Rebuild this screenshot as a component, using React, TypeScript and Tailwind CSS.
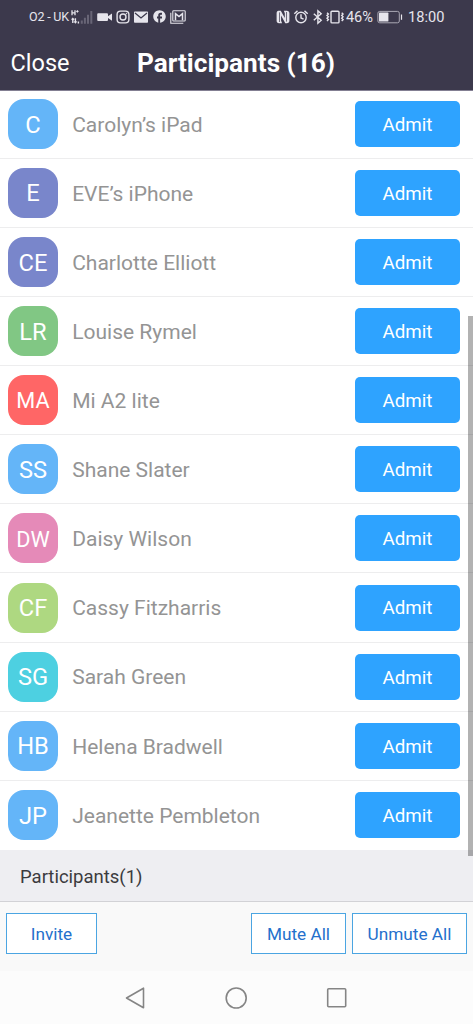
import type { ReactNode } from "react";
import { MdFacebook } from "react-icons/md";

const waiting = [
  { initials: "C", name: "Carolyn’s iPad", color: "bg-[#64b5f8]" },
  { initials: "E", name: "EVE’s iPhone", color: "bg-[#7986cb]" },
  { initials: "CE", name: "Charlotte Elliott", color: "bg-[#7986cb]" },
  { initials: "LR", name: "Louise Rymel", color: "bg-[#81c784]" },
  { initials: "MA", name: "Mi A2 lite", color: "bg-[#ff6666]" },
  { initials: "SS", name: "Shane Slater", color: "bg-[#64b5f8]" },
  { initials: "DW", name: "Daisy Wilson", color: "bg-[#e58ab8]" },
  { initials: "CF", name: "Cassy Fitzharris", color: "bg-[#aed881]" },
  { initials: "SG", name: "Sarah Green", color: "bg-[#4dd0e1]" },
  { initials: "HB", name: "Helena Bradwell", color: "bg-[#64b5f8]" },
  { initials: "JP", name: "Jeanette Pembleton", color: "bg-[#64b5f8]" },
];

function Signal() {
  return (
    <svg className="ml-[2px] h-4 w-[23px] shrink-0" viewBox="0 0 23 16" fill="none">
      <path d="M1 1.3v5M4 1.3v5M1 3.8h3" stroke="#e6e5ec" strokeWidth="1.3" />
      <path d="M5.2 2.4h2.4M6.4 1.2v2.4" stroke="#e6e5ec" />
      <path d="M1.8 9.5V14M.7 10.8l1.1-1.3 1.2 1.3M4.4 9.3v4.4M3.3 12.4l1.1 1.3 1.2-1.3M7.4 12.4v2.2" stroke="#e6e5ec" strokeWidth="1.4" />
      <path d="M10.8 11.5v3.2M13.9 8.8v5.9M17 5.8v8.9M20.3 2v12.7" stroke="#686576" strokeWidth="2" />
    </svg>
  );
}

function StatusBar() {
  return (
    <div className="flex h-[33px] items-center pl-[29px] text-[#e6e5ec]">
      <span className="w-[40px] shrink-0 whitespace-nowrap pt-[2px] text-[12.5px] tracking-[-0.2px]">O2 - UK</span>
      <Signal />
      <svg className="ml-[3px] h-4 w-4 shrink-0" viewBox="0 0 16 16" fill="currentColor">
        <path d="M1.5 4.2h8.2c.8 0 1.3.5 1.3 1.3v1.7L15 4.5v7.2L11 9v1.7c0 .8-.5 1.3-1.3 1.3H1.5C.7 12 .2 11.5.2 10.7V5.5c0-.8.5-1.3 1.3-1.3Z" />
      </svg>
      <svg className="ml-[2px] h-4 w-4 shrink-0" viewBox="0 0 16 16" fill="none" stroke="currentColor" strokeWidth="1.4">
        <rect x="2.1" y="2.1" width="11.8" height="11.8" rx="3.4" />
        <circle cx="8" cy="8" r="3" />
        <circle cx="11.5" cy="4.6" r=".5" fill="currentColor" strokeWidth=".5" />
      </svg>
      <svg className="ml-[2px] h-4 w-4 shrink-0" viewBox="0 0 16 16">
        <rect x="1" y="2.6" width="14" height="11.2" rx=".8" fill="currentColor" />
        <path d="m2 4 6 5 6-5" fill="none" stroke="#3c394c" strokeWidth="1.3" />
      </svg>
      <MdFacebook className="ml-[3px] size-[15px] shrink-0" />
      <svg className="ml-[3px] h-4 w-4 shrink-0" viewBox="0 0 16 16" fill="none">
        <path d="M.8 3.8v10.4h12.5" stroke="currentColor" strokeWidth="1.1" />
        <rect x="2.8" y="1.8" width="12.4" height="10.2" rx=".8" stroke="currentColor" strokeWidth="1.1" />
        <path d="M5.5 11.2V4.6L9 7.6l3.5-3v6.6" stroke="currentColor" strokeWidth="1.5" />
      </svg>

      <svg className="ml-[90px] h-4 w-[14px] shrink-0" viewBox="0 0 14 16">
        <path d="M2.4 1.8h2.4l4 7.3V4.2L7.8 1.8h3.1c1.5 0 2.5 1 2.5 2.5v7.4c0 1.6-1 2.5-2.5 2.5H9.3L5.1 6.6v5.2l1 2.4H3c-1.5 0-2.4-.9-2.4-2.5V4.3c0-1.6.8-2.5 1.8-2.5Z" fill="currentColor" />
        <path d="M3.5 3.4v9.6M10.5 3v9.6" stroke="#3c394c" strokeWidth=".7" />
      </svg>
      <svg className="ml-[3px] h-4 w-4 shrink-0" viewBox="0 0 16 16" fill="none" stroke="currentColor" strokeWidth="1.4">
        <circle cx="8" cy="8.5" r="5.2" />
        <path d="M1.3 4.7 4.5 1.9M14.7 4.7l-3.2-2.8M8 5.3V9l2.6 1.2" />
      </svg>
      <svg className="ml-[3px] h-4 w-3 shrink-0" viewBox="0 0 12 16" fill="none" stroke="currentColor" strokeWidth="1.4">
        <path d="m1.8 4.7 7.4 6.6-3.3 2.9V1.8l3.3 2.9-7.4 6.6" />
      </svg>
      <svg className="ml-[2px] h-4 w-[18px] shrink-0" viewBox="0 0 18 16" fill="none" stroke="currentColor">
        <rect x="5" y="2.3" width="8" height="11.6" rx="1" strokeWidth="1.4" />
        <path d="M1 3.7 2.4 5 1 6.4l1.4 1.4L1 9.3l1.4 1.3L1 12M15.7 3.7l1.4 1.3-1.4 1.4 1.4 1.4-1.4 1.5 1.4 1.3-1.4 1.4" strokeWidth="1.4" />
      </svg>
      <span className="ml-[2px] w-[29px] shrink-0 whitespace-nowrap pt-[2px] text-[14.6px] tracking-[-0.1px]">46%</span>
      <svg className="ml-[2px] h-4 w-[26px] shrink-0" viewBox="0 0 26 16">
        <rect x=".9" y="2.4" width="21.4" height="11.4" rx="1.8" fill="none" stroke="#aaa8b4" />
        <rect x="2" y="3.6" width="9.4" height="9" rx=".6" fill="currentColor" />
        <path d="M24.5 5.5v5.3" stroke="currentColor" strokeWidth="1.2" />
      </svg>
      <span className="ml-[5px] shrink-0 whitespace-nowrap pt-[2px] text-[14.6px]">18:00</span>
    </div>
  );
}

function ToolButton({ children, className }: { children: ReactNode; className: string }) {
  return (
    <button className={`h-[41px] whitespace-nowrap border border-[#4ba5e2] bg-white pt-[2px] text-[17.2px] text-[#2470cc] ${className}`}>
      {children}
    </button>
  );
}

export default function App() {
  return (
    <div className="relative flex h-[1024px] w-[473px] flex-col overflow-hidden bg-white font-[Roboto,sans-serif]">
      <header className="h-[91px] shrink-0 border-b border-[#837f92] bg-[#3c394c]">
        <StatusBar />
        <div className="grid h-[57px] grid-cols-[137px_1fr] items-center">
          <button className="pl-[10.5px] pt-[4px] text-left text-[23.5px] text-white">Close</button>
          <h1 className="whitespace-nowrap pt-[5px] text-[26.2px] font-bold text-white">Participants (16)</h1>
        </div>
      </header>

      <ul className="h-[759px] shrink-0 overflow-hidden">
        {waiting.map(({ initials, name, color }, i) => (
          <li
            key={name}
            className={`flex items-center border-b border-[#ededee] pl-[8px] pr-[13px] last:border-b-0 ${i === 0 ? "h-[67.7px]" : "h-[69.13px]"}`}
          >
            <span
              className={`flex size-[50px] shrink-0 items-center justify-center rounded-[16px] pt-[3px] text-white ${color} ${initials === "MA" || initials === "DW" ? "text-[21.7px]" : "text-[23.7px]"}`}
            >
              {initials}
            </span>
            <span className="ml-[14.2px] flex-1 whitespace-nowrap pt-[3px] text-[21px] text-[#949494]">{name}</span>
            <button className="h-[46px] w-[105px] rounded-[5px] bg-[#2ea3ff] pt-[2px] text-[18.8px] text-white">Admit</button>
          </li>
        ))}
      </ul>

      <h2 className="flex h-[52px] shrink-0 items-center border-b border-[#d2d2d6] bg-[#eeeef2] pl-[20px] pt-[4px] text-[18.5px] text-[#3b3b3e]">
        Participants(1)
      </h2>
      <div className="flex h-[69px] shrink-0 items-start bg-[#f9f9f9] px-[6px] pt-[11px]">
        <ToolButton className="w-[91px]">Invite</ToolButton>
        <ToolButton className="ml-auto w-[95px]">Mute All</ToolButton>
        <ToolButton className="ml-[6px] w-[115px]">Unmute All</ToolButton>
      </div>
      <nav className="flex flex-1 items-center gap-[77px] bg-[#fcfcfc] pl-[123px] pt-[1px]">
        <svg className="size-6" viewBox="0 0 24 24" fill="none" stroke="#858585" strokeWidth="1.6" strokeLinejoin="round">
          <path d="M20.5 2.2v19.6L3.5 12Z" />
        </svg>
        <svg className="size-6" viewBox="0 0 24 24" fill="none" stroke="#858585" strokeWidth="1.6">
          <circle cx="12.2" cy="12" r="10" />
        </svg>
        <svg className="size-6" viewBox="0 0 24 24" fill="none" stroke="#858585" strokeWidth="1.6">
          <rect x="2.7" y="2.7" width="18" height="18" rx="1" />
        </svg>
      </nav>

      <div className="absolute right-0 top-[316px] h-[540px] w-[5px] bg-black/30" />
    </div>
  );
}
